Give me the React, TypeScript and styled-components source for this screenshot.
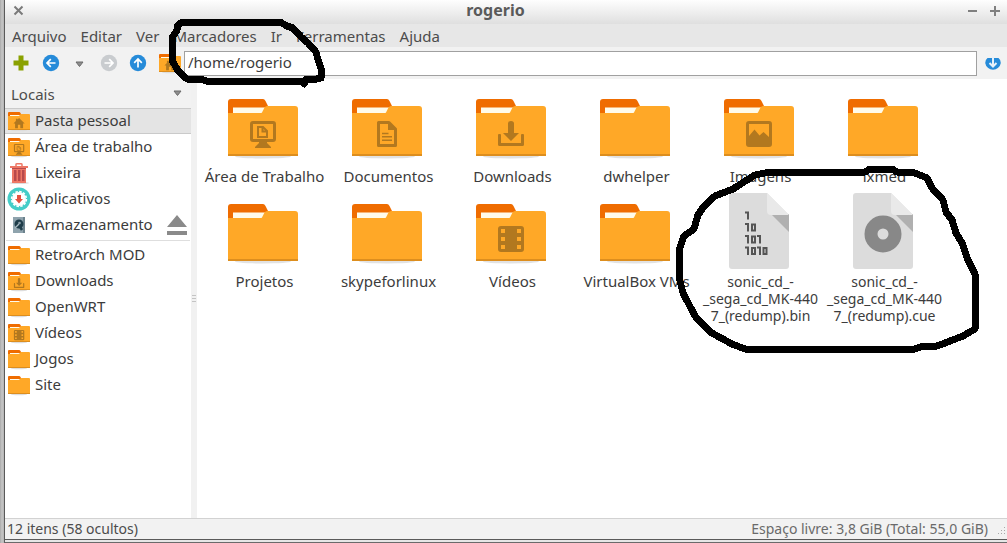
import React from 'react';
import styled, { createGlobalStyle } from 'styled-components';

const GlobalStyle = createGlobalStyle`
  * { box-sizing: border-box; }
  body { margin: 0; background: #bdbdbd; font-family: "Noto Sans", "Open Sans", sans-serif; font-size: 15px; color: #3c3c3c; }
  button, input { font: inherit; color: inherit; }
  button { background: none; border: 0; padding: 0; }
  svg { display: block; flex: none; }
`;

const Desktop = styled.div`
  position: relative;
  display: flex;
  flex-direction: column;
  min-height: 100vh;
  padding-left: 4px;
  overflow: hidden;
  background: linear-gradient(to right, #a9a9a9, #c6c6c6 2px, #b4b4b4 4px);
`;

const Window = styled.div`
  flex: 1;
  display: flex;
  flex-direction: column;
  border-left: 1px solid #5a5a5a;
  border-bottom: 1px solid #5a5a5a;
  background: #f2f2f2;
`;

const TitleBar = styled.header`
  display: flex;
  align-items: center;
  height: 24px;
  padding: 0 7px 4px 8px;
  background: linear-gradient(#fefefe, #dfdfdf);
`;

const Title = styled.h1`
  flex: 1;
  margin: 0;
  text-align: center;
  font-size: 16px;
  line-height: 20px;
  color: #5a5a5a;
`;

const WindowButton = styled.button<{ $gap?: number }>`
  display: flex;
  margin-left: ${(p) => p.$gap ?? 0}px;
`;

const MenuBar = styled.nav`
  display: flex;
  align-items: center;
  gap: 14px;
  height: 23px;
  padding: 0 7px;
  background: #e7e7e7;
  color: #4c4c4c;
`;

const MenuItem = styled.button`
  line-height: 20px;
`;

const Toolbar = styled.div`
  display: flex;
  align-items: center;
  height: 32px;
  padding: 0 5px 0 6px;
`;

const Tools = styled.div`
  display: flex;
  align-items: center;
  gap: 11px;
  flex: none;
  width: 173px;
  overflow: hidden;
`;

const ToolButton = styled.button`
  display: flex;
  flex: none;
`;

const PathInput = styled.input`
  flex: 1;
  min-width: 0;
  height: 25px;
  margin-right: 7px;
  padding: 0 3px 2px;
  border: 1px solid #a0a0a0;
  background: #fff;
  font-size: 15px;
  outline: 0;
`;

const Body = styled.div`
  flex: 1;
  display: flex;
  min-height: 0;
`;

const Sidebar = styled.aside`
  flex: none;
  width: 186px;
  background: #fff;
`;

const PlacesHeader = styled.button`
  display: flex;
  align-items: center;
  justify-content: space-between;
  width: 100%;
  height: 29px;
  padding: 0 9px 0 6px;
  background: #f2f2f2;
  color: #4c4c4c;
`;

const Places = styled.ul`
  margin: 0;
  padding: 0;
  list-style: none;
`;

const PlaceRow = styled.li<{ $selected?: boolean }>`
  display: flex;
  align-items: center;
  height: 26px;
  padding: 0 4px 0 2px;
  border: solid ${(p) => (p.$selected ? '#cacaca' : 'transparent')};
  border-width: 1px 0;
  background: ${(p) => (p.$selected ? '#e4e4e4' : '#fff')};
`;

const PlaceLink = styled.a`
  flex: 1;
  display: flex;
  align-items: center;
  gap: 4px;
  color: inherit;
  text-decoration: none;
  white-space: nowrap;
`;

const PlaceName = styled.span`
  padding-bottom: 2px;
  line-height: 20px;
`;

const Divider = styled.hr`
  height: 1px;
  margin: 2px 1px 1px;
  border: 0;
  background: #dedede;
`;

const PaneHandle = styled.div`
  flex: none;
  display: flex;
  flex-direction: column;
  align-items: center;
  justify-content: center;
  gap: 2px;
  width: 6px;
  background: #f1f1f1;
`;

const Grip = styled.span`
  width: 4px;
  height: 1px;
  background: #c4c4c4;
`;

const Files = styled.main`
  flex: 1;
  display: grid;
  grid-template-columns: repeat(auto-fill, 124px);
  align-content: start;
  row-gap: 6px;
  padding: 7px 4px;
  background: #fff;
`;

const FileLink = styled.a`
  display: flex;
  flex-direction: column;
  align-items: center;
  gap: 2px;
  line-height: 17px;
  text-align: center;
  white-space: pre;
  color: inherit;
  text-decoration: none;
`;

const FileName = styled.span<{ $wrapped?: boolean }>`
  padding-left: 3px;
  font-size: ${(p) => (p.$wrapped ? 14 : 15)}px;
`;

const StatusBar = styled.footer`
  display: flex;
  align-items: center;
  justify-content: space-between;
  height: 21px;
  padding: 0 1px 2px 2px;
  border-top: 1px solid #d2d2d2;
  font-size: 14px;
  color: #4c4c4c;
`;

const FreeSpace = styled.span`
  display: flex;
  align-items: center;
  gap: 10px;
  color: #6a6a6a;
`;

const BehindWindow = styled.div`
  height: 3px;
  border-bottom: 1px solid #6a6a6a;
  border-left: 1px solid #5a5a5a;
  background: #e6e6e6;
`;

const Scribble = styled.svg`
  position: absolute;
  top: 0;
  left: 0;
  pointer-events: none;
`;

type Emblem = 'home' | 'desktop' | 'document' | 'download' | 'image' | 'video';

const INK = '#b2781f';

function EmblemShape({ kind }: { kind: Emblem }) {
  switch (kind) {
    case 'home':
      return <path fill={INK} d="M14 1 L28 15 H24 V27 H17 V18 H11 V27 H4 V15 H0 L6 9 V3 H10 V5 Z" />;
    case 'desktop':
      return (
        <g fill="none" stroke={INK} strokeWidth="3">
          <rect x="2.500" y="2.500" width="23" height="18" rx="1.500" />
          <path strokeWidth="2" d="M9 7 H14 L18 11 V17 H9 Z M13.500 7 V11.500 H18" />
          <path fill={INK} stroke="none" d="M10 21 H18 V23 L22 27 V28 H6 V27 L10 23 Z" />
        </g>
      );
    case 'document':
      return (
        <g fill="none" stroke={INK}>
          <path strokeWidth="3" strokeLinejoin="round" d="M5.500 2.500 H16 L22.500 9 V25.500 H5.500 Z" />
          <path fill={INK} stroke="none" d="M15 2 V10 H23 Z" />
          <path strokeWidth="1.500" d="M9 13.500 H15.500 M9 16.800 H19 M9 20.200 H19" />
        </g>
      );
    case 'download':
      return (
        <g fill={INK}>
          <path d="M11 3.500 Q11 1 14 1 T17 3.500 V13 H22 L14 21 L6 13 H11 Z" />
          <path d="M1 15 Q1 14 2 14 H3 Q4 14 4 15 V23 H24 V15 Q24 14 25 14 H26 Q27 14 27 15 V24.500 Q27 26 25.500 26 H2.500 Q1 26 1 24.500 Z" />
        </g>
      );
    case 'image':
      return (
        <path
          fill={INK}
          fillRule="evenodd"
          d="M4 1 H24 Q27 1 27 4 V24 Q27 27 24 27 H4 Q1 27 1 24 V4 Q1 1 4 1 Z M4 4 V16 L9.500 9.500 L14.500 15.500 L18.500 12 L24 17 V4 Z"
        />
      );
    case 'video':
      return (
        <g>
          <rect x="1" y="1" width="26" height="26" rx="3" fill={INK} />
          <path fill="#ffa827" d="M4 4 H8 V8 H4 Z M4 12 H8 V16 H4 Z M4 20 H8 V24 H4 Z M20 4 H24 V8 H20 Z M20 12 H24 V16 H20 Z M20 20 H24 V24 H20 Z" />
        </g>
      );
  }
}

function BigFolder({ emblem }: { emblem?: Emblem }) {
  return (
    <svg width="80" height="80" viewBox="0 0 80 80">
      <ellipse cx="40" cy="70.500" rx="28" ry="2" fill="#e2e2e2" />
      <path fill="#ef6c00" d="M5 30 V16 Q5 13 8 13 H40 Q41.500 13 42.500 15 L46 22 V30 Z" />
      <path fill="#fffbea" d="M10 21.500 H43 V28 H10 Z" />
      <path fill="#ffa827" d="M5 27 H38 Q39 27 39.500 25.500 L41.500 21.500 Q42.500 20 44 20 H72 Q75 20 75 23 V70 H5 Z" />
      <rect x="5" y="68" width="70" height="2" fill="#dd8e1e" />
      {emblem && (
        <g transform="translate(26 34)">
          <EmblemShape kind={emblem} />
        </g>
      )}
    </svg>
  );
}

function SmallFolder({ emblem }: { emblem?: Emblem }) {
  return (
    <svg width="24" height="24" viewBox="0 0 24 24">
      <ellipse cx="12" cy="21.300" rx="8" ry="1" fill="#dddddd" />
      <path fill="#ef6c00" d="M1 8 V4 Q1 3 2 3 H12 Q13 3 13.500 4 L14.500 6 V8 Z" />
      <path fill="#fffbea" d="M3 6 H13 V7.500 H3 Z" />
      <path fill="#ffa827" d="M1 7 H11.500 Q12.300 7 12.800 6 Q13.300 5 14.500 5 H22 Q23 5 23 6 V21 H1 Z" />
      <rect x="1" y="20" width="22" height="1" fill="#dd8e1e" />
      {emblem && (
        <g transform="translate(6.500 8.500) scale(0.4)">
          <EmblemShape kind={emblem} />
        </g>
      )}
    </svg>
  );
}

function PageIcon({ kind }: { kind: 'binary' | 'disc' }) {
  return (
    <svg width="80" height="80" viewBox="0 0 80 80">
      <path fill="#dcdcdc" d="M13 2 H48 L70 24 V75 Q70 78 67 78 H13 Q10 78 10 75 V5 Q10 2 13 2 Z" />
      <path fill="#b0b0b0" d="M52 23 H70 V41 Z" />
      {kind === 'disc' ? (
        <circle cx="40" cy="43" r="12" fill="none" stroke="#888888" strokeWidth="13" />
      ) : (
        <path
          fill="none"
          stroke="#555555"
          strokeWidth="2"
          d="M26 21.500 H29 V28.500 M26 33 H29 V40.500 M33 33.500 H36 V39.500 H33 Z M26 45 H29 V52.500 M33 45.500 H36 V51.500 H33 Z M38 45 H41 V52.500 M26 56.500 H29 V64 M33 57 H36 V63 H33 Z M38 56.500 H41 V64 M44.500 57 H47.500 V63 H44.500 Z"
        />
      )}
      <path fill="#e9e9e9" d="M48 2 L70 24 H52 Q48 24 48 20 Z" />
    </svg>
  );
}

function TrashIcon() {
  return (
    <svg width="24" height="24" viewBox="0 0 24 24">
      <ellipse cx="12" cy="22" rx="10" ry="1" fill="#dddddd" />
      <path fill="none" stroke="#ee7765" strokeWidth="1.500" d="M9 5 V3.500 Q9 2.800 10 2.800 H14 Q15 2.800 15 3.500 V5" />
      <path fill="#ee7765" d="M3 5 H21 V7 H19 V22 H5 V7 H3 Z" />
      <path fill="#b84a4c" d="M5 7 H19 V8 H5 Z M7 9 H9.500 V20 H7 Z M11 9 H13.500 V20 H11 Z M15 9 H17.500 V20 H15 Z" />
    </svg>
  );
}

function AppsIcon() {
  return (
    <svg width="24" height="24" viewBox="0 0 24 24">
      <circle cx="12" cy="12" r="11.500" fill="#45cdc8" />
      <circle cx="12" cy="12" r="7" fill="#fff" />
      <circle cx="12" cy="12" r="7.400" fill="none" stroke="#fff" strokeWidth="1.600" strokeDasharray="2.500 1.370" />
      <path fill="#e25241" d="M10 8 H14 V12 H16 L12 16.500 L8 12 H10 Z" />
    </svg>
  );
}

function DriveIcon() {
  return (
    <svg width="24" height="24" viewBox="0 0 24 24">
      <path fill="#8fa3ad" d="M6 4 H18 V20 H6 Z" />
      <path fill="#6c828d" d="M16 4 H18 V20 H16 Z" />
      <circle cx="12" cy="11" r="4.500" fill="#1f3d4a" />
      <path stroke="#1f3d4a" strokeWidth="2.500" d="M12 12 L15 17" />
      <path stroke="#a9bac2" strokeWidth="1.200" d="M12 11 L8 15" />
      <circle cx="12.500" cy="10" r="1.300" fill="#8fa3ad" />
    </svg>
  );
}

function ArrowCircle({ color, arrow }: { color: string; arrow: string }) {
  return (
    <svg width="18" height="18" viewBox="0 0 18 18">
      <circle cx="9" cy="9" r="8.200" fill={color} />
      <path fill="none" stroke="#fff" strokeWidth="1.700" d={arrow} />
    </svg>
  );
}

function DownTriangle() {
  return (
    <svg width="9" height="7" viewBox="0 0 9 7">
      <path fill="#8e8e8e" stroke="#6b6b6b" strokeWidth="1" d="M1 1 H8 L4.500 5.500 Z" />
    </svg>
  );
}

const menus = ['Arquivo', 'Editar', 'Ver', 'Marcadores', 'Ir', 'Ferramentas', 'Ajuda'];

const places: { name: string; icon: React.ReactNode; selected?: boolean; removable?: boolean }[] = [
  { name: 'Pasta pessoal', icon: <SmallFolder emblem="home" />, selected: true },
  { name: 'Área de trabalho', icon: <SmallFolder emblem="desktop" /> },
  { name: 'Lixeira', icon: <TrashIcon /> },
  { name: 'Aplicativos', icon: <AppsIcon /> },
  { name: 'Armazenamento', icon: <DriveIcon />, removable: true },
];

const bookmarks: { name: string; emblem?: Emblem }[] = [
  { name: 'RetroArch MOD' },
  { name: 'Downloads', emblem: 'download' },
  { name: 'OpenWRT' },
  { name: 'Vídeos', emblem: 'video' },
  { name: 'Jogos' },
  { name: 'Site' },
];

const files: { name: string; emblem?: Emblem; page?: 'binary' | 'disc' }[] = [
  { name: 'Área de Trabalho', emblem: 'desktop' },
  { name: 'Documentos', emblem: 'document' },
  { name: 'Downloads', emblem: 'download' },
  { name: 'dwhelper' },
  { name: 'Imagens', emblem: 'image' },
  { name: 'lxmed' },
  { name: 'Projetos' },
  { name: 'skypeforlinux' },
  { name: 'Vídeos', emblem: 'video' },
  { name: 'VirtualBox VMs' },
  { name: 'sonic_cd_-\n_sega_cd_MK-440\n7_(redump).bin', page: 'binary' },
  { name: 'sonic_cd_-\n_sega_cd_MK-440\n7_(redump).cue', page: 'disc' },
];

export default function App() {
  return (
    <Desktop>
      <GlobalStyle />
      <Window>
        <TitleBar>
          <WindowButton aria-label="Fechar">
            <svg width="11" height="11" viewBox="0 0 11 11">
              <path stroke="#7a7a7a" strokeWidth="2" d="M1.500 1.500 L9.500 9.500 M9.500 1.500 L1.500 9.500" />
            </svg>
          </WindowButton>
          <Title>rogerio</Title>
          <WindowButton aria-label="Minimizar">
            <svg width="11" height="11" viewBox="0 0 11 11">
              <path fill="#7f7f7f" d="M1 5 H10 V7 H1 Z" />
            </svg>
          </WindowButton>
          <WindowButton aria-label="Maximizar" $gap={11}>
            <svg width="11" height="11" viewBox="0 0 11 11">
              <path fill="#7f7f7f" d="M1 5 H5 V1 H7 V5 H11 V7 H7 V11 H5 V7 H1 Z" />
            </svg>
          </WindowButton>
        </TitleBar>
        <MenuBar>
          {menus.map((m) => (
            <MenuItem key={m}>{m}</MenuItem>
          ))}
        </MenuBar>
        <Toolbar>
          <Tools>
            <ToolButton aria-label="Nova aba">
              <svg width="20" height="18" viewBox="0 0 20 18">
                <path fill="#8aa100" d="M7.500 1.500 H12.500 V6.500 H17.500 V11.500 H12.500 V16.500 H7.500 V11.500 H2.500 V6.500 H7.500 Z" />
              </svg>
            </ToolButton>
            <ToolButton aria-label="Voltar">
              <ArrowCircle color="#268bd9" arrow="M13.500 9 H5.500 M8.800 5.200 L5 9 L8.800 12.800" />
            </ToolButton>
            <ToolButton aria-label="Histórico">
              <svg width="18" height="18" viewBox="0 0 18 18">
                <path fill="#8e8e8e" stroke="#6b6b6b" d="M5 8 H12 L8.500 12.500 Z" />
              </svg>
            </ToolButton>
            <ToolButton aria-label="Avançar">
              <ArrowCircle color="#c9cccf" arrow="M4.500 9 H12.500 M9.200 5.200 L13 9 L9.200 12.800" />
            </ToolButton>
            <ToolButton aria-label="Subir">
              <ArrowCircle color="#268bd9" arrow="M9 13.500 V5.500 M5.200 8.800 L9 5 L12.800 8.800" />
            </ToolButton>
            <ToolButton aria-label="Pasta pessoal">
              <SmallFolder emblem="home" />
            </ToolButton>
          </Tools>
          <PathInput aria-label="Caminho" defaultValue="/home/rogerio" />
          <ToolButton aria-label="Ir">
            <svg width="18" height="18" viewBox="0 0 18 18">
              <path fill="#268bd9" d="M3.500 4 H14.500 Q17 6 16.800 9 A7.900 7.900 0 0 1 1.200 9 Q1 6 3.500 4 Z" />
              <path fill="none" stroke="#e6f1fa" strokeWidth="2" d="M9 3 V12 M5.500 9 L9 12.500 L12.500 9" />
            </svg>
          </ToolButton>
        </Toolbar>
        <Body>
          <Sidebar>
            <PlacesHeader>
              Locais
              <DownTriangle />
            </PlacesHeader>
            <Places>
              {places.map((p) => (
                <PlaceRow key={p.name} $selected={p.selected}>
                  <PlaceLink href="#">
                    {p.icon}
                    <PlaceName>{p.name}</PlaceName>
                  </PlaceLink>
                  {p.removable && (
                    <ToolButton aria-label="Ejetar">
                      <svg width="20" height="20" viewBox="0 0 20 20">
                        <path fill="#8a8a8a" d="M10 0 L20 12 H0 Z M0 16 H20 V20 H0 Z" />
                      </svg>
                    </ToolButton>
                  )}
                </PlaceRow>
              ))}
            </Places>
            <Divider />
            <Places>
              {bookmarks.map((b) => (
                <PlaceRow key={b.name}>
                  <PlaceLink href="#">
                    <SmallFolder emblem={b.emblem} />
                    <PlaceName>{b.name}</PlaceName>
                  </PlaceLink>
                </PlaceRow>
              ))}
            </Places>
          </Sidebar>
          <PaneHandle>
            <Grip />
            <Grip />
            <Grip />
          </PaneHandle>
          <Files>
            {files.map((f) => (
              <FileLink key={f.name} href="#">
                {f.page ? <PageIcon kind={f.page} /> : <BigFolder emblem={f.emblem} />}
                <FileName $wrapped={Boolean(f.page)}>{f.name}</FileName>
              </FileLink>
            ))}
          </Files>
        </Body>
        <StatusBar>
          <span>12 itens (58 ocultos)</span>
          <FreeSpace>
            Espaço livre: 3,8 GiB (Total: 55,0 GiB)
            <svg width="8" height="18" viewBox="0 0 8 18">
              <path fill="#a8a8a8" d="M6 8 h1 v1 h-1 Z M3 11 h1 v1 h-1 Z M6 11 h1 v1 h-1 Z M0 14 h1 v1 h-1 Z M3 14 h1 v1 h-1 Z M6 14 h1 v1 h-1 Z" />
            </svg>
          </FreeSpace>
        </StatusBar>
      </Window>
      <BehindWindow />
      <Scribble
        width="1007"
        height="360"
        viewBox="0 0 1007 360"
        fill="none"
        stroke="#000"
        strokeWidth="7"
        strokeLinejoin="round"
        shapeRendering="crispEdges"
      >
        <path d="M182 22 H280 L287 26 L293 28 L301 37 L308 43 L316 52 L318 60 L321 68 V78 L312 80 L306 79 L304 84 L301 81 L210 82 L200 79 L187 79 L178 71 L172 60 V38 L177 30 L177 26 Z" />
        <path d="M770 172 H865 L870 169 H892 L897 172 L915 173 L927 178 L932 188 L943 200 L946 212 L952 220 L956 233 L962 243 L968 260 L975 274 V329 L963 336 L945 343 L937 346 L920 347 L915 349 H745 L732 344 L710 332 L695 316 L683 293 L679 277 V250 L684 236 L694 229 L698 215 L704 206 L715 196 L733 189 L747 180 L755 175 Z" />
      </Scribble>
    </Desktop>
  );
}
